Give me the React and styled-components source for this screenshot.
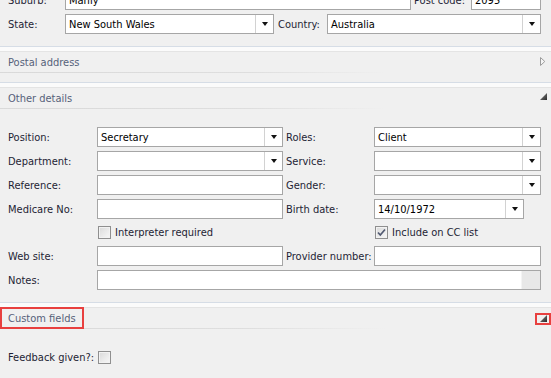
import React from "react";
import styled, { createGlobalStyle, css } from "styled-components";

const GlobalStyle = createGlobalStyle`
  html, body { margin: 0; padding: 0; background: #f0f0f0; }
  body {
    font-family: "DejaVu Sans Condensed", "DejaVu Sans", "Liberation Sans", sans-serif;
    font-stretch: condensed;
    font-size: 11px;
    color: #1e1e34;
  }
  * { box-sizing: border-box; }
`;

const Page = styled.div`
  width: 551px;
  height: 378px;
  overflow: hidden;
  background: #f0f0f0;
`;

const Scroller = styled.div`
  margin-top: -10px;
  display: flex;
  flex-direction: column;
`;

const AddressBlock = styled.div`
  display: flex;
  flex-direction: column;
  gap: 4px;
  padding: 0 10px 0 8px;
`;

const Row = styled.div`
  display: flex;
  align-items: center;
  height: ${(p) => p.$h || 20}px;
`;

const Label = styled.div`
  width: ${(p) => p.$w}px;
  padding-left: ${(p) => p.$pl || 0}px;
  flex: none;
  white-space: nowrap;
  color: #1e1e34;
  line-height: 13px;
`;

const Box = styled.div`
  width: ${(p) => (p.$w ? `${p.$w}px` : "auto")};
  flex: none;
  height: 20px;
  background: #fff;
  border: 1px solid #a6a6a6;
  display: flex;
  align-items: stretch;
  color: #000;
`;

const BoxText = styled.div`
  flex: 1;
  padding-left: 3px;
  display: flex;
  align-items: center;
  white-space: nowrap;
  overflow: hidden;
`;

const DropButton = styled.div`
  width: 18px;
  flex: none;
  border-left: 1px solid #d2d2d2;
  display: flex;
  align-items: center;
  justify-content: center;
  &::after {
    content: "";
    width: 0;
    height: 0;
    border-left: 3.5px solid transparent;
    border-right: 3.5px solid transparent;
    border-top: 4px solid #111;
  }
`;

const ScrollStrip = styled.div`
  width: 19px;
  flex: none;
  background: #e8e8e8;
  border-left: 1px solid #f4f4f4;
`;

const TextBox = ({ w, value }) => (
  <Box $w={w}>
    <BoxText>{value}</BoxText>
  </Box>
);

const Combo = ({ w, value }) => (
  <Box $w={w}>
    <BoxText>{value}</BoxText>
    <DropButton />
  </Box>
);

/* ---------- section header ---------- */

const Section = styled.section`
  margin-top: ${(p) => p.$mt || 0}px;
`;

const HeaderTop = styled.div`
  border-top: 1px solid #d6dde6;
  height: 6px;
  background: #fbfbfb;
  border-bottom: 1px solid #e4e4e4;
`;

const TitleBar = styled.div`
  position: relative;
  height: 20px;
  padding: 0 8px;
  display: flex;
  align-items: center;
  justify-content: space-between;
  background: #f0f0f0;
  color: #56617a;
`;

const TitleShadow = styled.div`
  height: 1px;
  background: linear-gradient(to right, #d9d9d9 0%, #dedede 45%, rgba(240, 240, 240, 0) 70%);
`;

const Highlight = styled.div`
  position: absolute;
  border: 2px solid #e8403f;
  pointer-events: none;
  ${(p) => css`
    left: ${p.$l}px;
    top: ${p.$t}px;
    width: ${p.$w}px;
    height: ${p.$h}px;
  `}
`;

const HeaderIcon = styled.svg`
  position: absolute;
  right: ${(p) => p.$r}px;
  top: ${(p) => p.$t}px;
`;

const CollapsedIcon = () => (
  <HeaderIcon $r={5} $t={5} width="6" height="9" viewBox="0 0 6 9">
    <path d="M0.5 0.5 L4.8 4.5 L0.5 8.5 Z" fill="#f6f6f6" stroke="#9c9c9c" strokeWidth="1" />
  </HeaderIcon>
);

const ExpandedIcon = ({ t }) => (
  <HeaderIcon $r={4} $t={t} width="7" height="7" viewBox="0 0 7 7">
    <defs>
      <linearGradient id="tri" x1="0" y1="0" x2="1" y2="1">
        <stop offset="0" stopColor="#8a8a8a" />
        <stop offset="1" stopColor="#2a2a2a" />
      </linearGradient>
    </defs>
    <path d="M7 0 L7 7 L0 7 Z" fill="url(#tri)" />
  </HeaderIcon>
);

const SectionHeader = ({ title, expanded, highlight }) => (
  <>
    <HeaderTop />
    <TitleBar>
      <span>{title}</span>
      {expanded ? <ExpandedIcon t={expanded === "low" ? 7 : 5} /> : <CollapsedIcon />}
      {highlight && (
        <>
          <Highlight $l={0} $t={-1} $w={84} $h={22} />
          <Highlight $l={535} $t={5} $w={16} $h={12} />
        </>
      )}
    </TitleBar>
    <TitleShadow />
  </>
);

/* ---------- details grid ---------- */

const DetailsGrid = styled.div`
  display: grid;
  grid-template-columns: 89px 186px 91px 167px;
  row-gap: 4px;
  padding: 18px 10px 12px 8px;
  align-items: center;
`;

const GridLabel = styled.div`
  padding-left: ${(p) => p.$pl || 0}px;
  white-space: nowrap;
  line-height: 13px;
  color: #1e1e34;
`;

const Span = styled.div`
  grid-column: ${(p) => p.$col};
  display: flex;
  align-items: center;
  height: ${(p) => p.$h || 20}px;
`;

const CheckWrap = styled.label`
  display: flex;
  align-items: center;
  gap: 4px;
  padding-left: 1px;
  white-space: nowrap;
  color: #1e1e34;
`;

const CheckBoxBox = styled.span`
  width: 13px;
  height: 13px;
  flex: none;
  border: 1px solid #8f8f8f;
  background: linear-gradient(135deg, #d9d9d9 0%, #ececec 60%, #f7f7f7 100%);
  box-shadow: inset 0 0 0 1px #f2f2f2;
  display: flex;
  align-items: center;
  justify-content: center;
`;

const CheckBox = ({ checked }) => (
  <CheckBoxBox>
    {checked && (
      <svg width="11" height="11" viewBox="0 0 11 11">
        <path d="M2 5.5 L4.3 8 L9 2.5" fill="none" stroke="#525a72" strokeWidth="1.7" />
      </svg>
    )}
  </CheckBoxBox>
);

const CustomBody = styled.div`
  padding: 22px 10px 0 8px;
`;

export default function App() {
  return (
    <Page>
      <GlobalStyle />
      <Scroller>
        <AddressBlock>
          <Row>
            <Label $w={57}>Suburb:</Label>
            <TextBox w={346} value="Manly" />
            <Label $w={60} $pl={3}>Post code:</Label>
            <TextBox w={70} value="2095" />
          </Row>
          <Row>
            <Label $w={57}>State:</Label>
            <Combo w={209} value="New South Wales" />
            <Label $w={53} $pl={4}>Country:</Label>
            <Combo w={214} value="Australia" />
          </Row>
        </AddressBlock>

        <Section $mt={12}>
          <SectionHeader title="Postal address" />
        </Section>

        <Section $mt={9}>
          <SectionHeader title="Other details" expanded="mid" />
          <DetailsGrid>
            <GridLabel>Position:</GridLabel>
            <Combo value="Secretary" />
            <GridLabel $pl={3}>Roles:</GridLabel>
            <Combo value="Client" />

            <GridLabel>Department:</GridLabel>
            <Combo value="" />
            <GridLabel $pl={3}>Service:</GridLabel>
            <Combo value="" />

            <GridLabel>Reference:</GridLabel>
            <TextBox value="" />
            <GridLabel $pl={3}>Gender:</GridLabel>
            <Combo value="" />

            <GridLabel>Medicare No:</GridLabel>
            <TextBox value="" />
            <GridLabel $pl={3}>Birth date:</GridLabel>
            <Span $col="4">
              <Combo w={150} value="14/10/1972" />
            </Span>

            <Span $col="2" $h={19}>
              <CheckWrap>
                <CheckBox />
                Interpreter required
              </CheckWrap>
            </Span>
            <Span $col="4" $h={19}>
              <CheckWrap>
                <CheckBox checked />
                Include on CC list
              </CheckWrap>
            </Span>

            <GridLabel>Web site:</GridLabel>
            <TextBox value="" />
            <GridLabel $pl={3}>Provider number:</GridLabel>
            <TextBox value="" />

            <GridLabel>Notes:</GridLabel>
            <Span $col="2 / 5">
              <Box style={{ width: "100%" }}>
                <BoxText />
                <ScrollStrip />
              </Box>
            </Span>
          </DetailsGrid>
        </Section>

        <Section>
          <SectionHeader title="Custom fields" expanded="low" highlight />
          <CustomBody>
            <Row $h={13}>
              <Label $w={90}>Feedback given?:</Label>
              <CheckBox />
            </Row>
          </CustomBody>
        </Section>
      </Scroller>
    </Page>
  );
}
